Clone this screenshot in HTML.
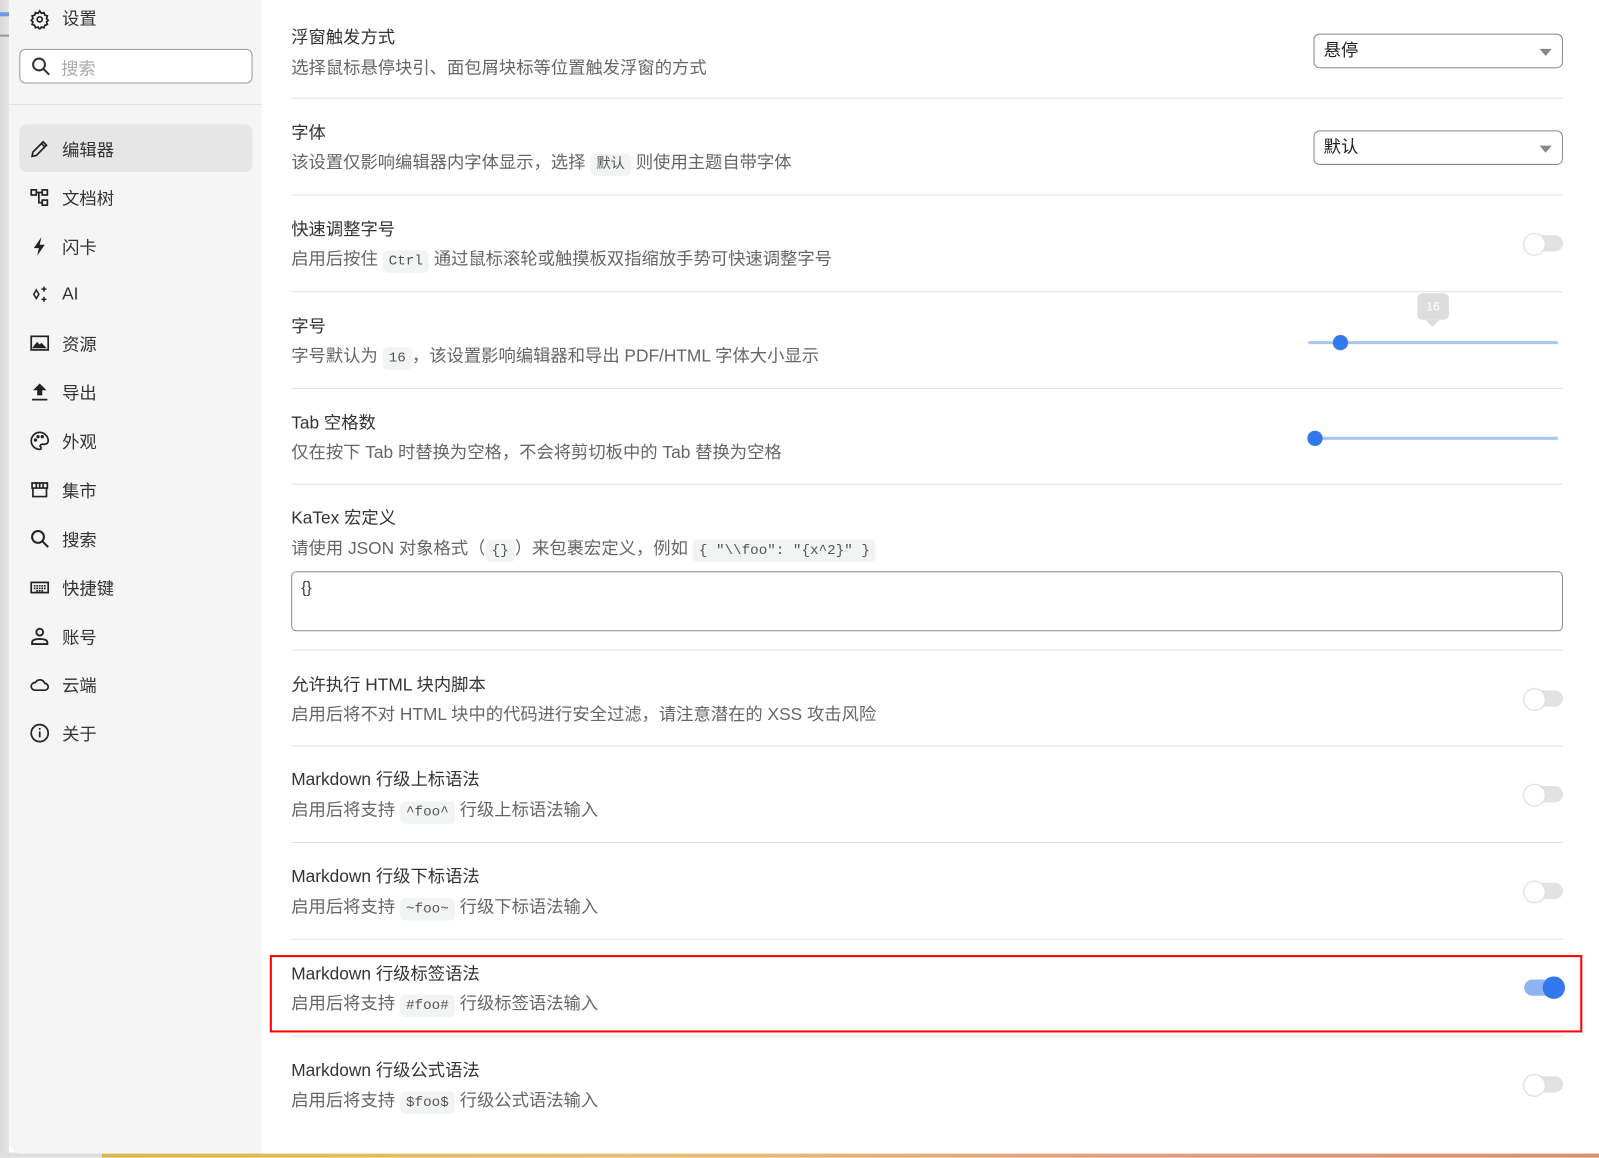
<!DOCTYPE html>
<html><head><meta charset="utf-8">
<style>
*{box-sizing:border-box;margin:0;padding:0}
html,body{width:1599px;height:1157px;overflow:hidden;background:#fff;font-family:"Liberation Sans","Noto Sans CJK SC",sans-serif}
#root{position:absolute;left:0;top:0;width:1571px;height:1137px;transform:scale(1.0182);transform-origin:0 0}
.leftstrip{position:absolute;left:0;top:0;width:9px;height:1137px;background:linear-gradient(90deg,#d8d8d8,#e6e6e6)}
.leftstrip .b{position:absolute;left:0;top:12px;width:9px;height:4px;background:#6f9ce0}
.leftstrip .g{position:absolute;left:0;top:34px;width:9px;height:2px;background:#999}
.bottom{position:absolute;left:0;top:1132px;width:1571px;height:5px;background:linear-gradient(90deg,#ddd 0,#ddd 100px,#d8b850 100px,#e8c070 40%,#e0a080 70%,#d89070)}
.panel{position:absolute;left:9px;top:0;width:1562px;height:1133px;background:#fff;border-bottom-left-radius:12px;overflow:hidden}
.side{position:absolute;left:0;top:0;width:248px;height:1133px;background:#f5f5f5}
.side .hd{position:absolute;left:20px;top:7px;font-size:17px;color:#333;display:flex;align-items:center;gap:12px;line-height:24px}
.search{position:absolute;left:10px;top:48px;width:229px;height:34px;border:1px solid #999;border-radius:6px;background:#fff;display:flex;align-items:center;padding-left:10px;gap:10px;color:#aaa;font-size:17px}
.sep{position:absolute;left:0;top:102px;width:248px;height:1px;background:#e0e0e0}
.item{position:absolute;left:10px;width:229px;height:47px;border-radius:8px;display:flex;align-items:center;padding-left:10px;gap:12px;font-size:17px;color:#333}
.item.act{background:#e6e6e6}
.item svg{width:20px;height:20px;flex:none}
.t{position:absolute;left:277px;font-size:17px;color:#333;line-height:22px;white-space:nowrap}
.d{position:absolute;left:277px;font-size:17px;color:#666;white-space:nowrap;line-height:22px}
.c{font-family:"Liberation Mono","Noto Sans CJK SC",monospace;font-size:14px;background:#f2f3f3;border-radius:5px;padding:3px 6px;color:#555}
.hr{position:absolute;left:277px;width:1249px;height:1px;background:#e3e3e3}
.sel{position:absolute;left:1281px;width:245px;height:34px;border:1px solid #888;border-radius:6px;font-size:17px;color:#222;padding:5px 0 0 9px;line-height:22px}
.sel:after{content:"";position:absolute;right:10px;top:14px;border-left:6px solid transparent;border-right:6px solid transparent;border-top:7px solid #888}
.tg{position:absolute;left:1488px;width:38px;height:16px;border-radius:8px;background:#e2e2e2}
.tg:before{content:"";position:absolute;left:-1px;top:-2px;width:20px;height:20px;border-radius:50%;background:#fff;border:1px solid #e0e0e0;box-shadow:0 0 1px #ccc}
.tg.on{background:#8fb4f5}
.tg.on:before{left:18px;top:-3px;width:22px;height:22px;background:#3478f0;border:none}
.sl{position:absolute;left:1276px;width:245px;height:3px;background:#aac6f5}
.dot{position:absolute;width:15px;height:15px;border-radius:50%;background:#3478f0}
</style></head><body>
<div id="root">
<div class="leftstrip"><div class="b"></div><div class="g"></div></div>
<div class="bottom"></div>
<div class="panel">
<div class="side">
 <div class="hd"><svg width="20" height="20" viewBox="0 0 24 24" fill="none" stroke="#222" stroke-width="2"><circle cx="12" cy="12" r="3"/><path d="M12 2l2 3 3-1 1 3 3 1-1 3 2 2-2 2 1 3-3 1-1 3-3-1-2 3-2-3-3 1-1-3-3-1 1-3-2-2 2-2-1-3 3-1 1-3 3 1z"/></svg>设置</div>
 <div class="search"><svg width="20" height="20" viewBox="0 0 24 24" fill="none" stroke="#333" stroke-width="2.4"><circle cx="10" cy="10" r="7"/><path d="M15 15l7 7"/></svg>搜索</div>
 <div class="sep"></div>
 <div class="item act" style="top:122px"><svg viewBox="0 0 24 24" fill="none" stroke="#222" stroke-width="2"><path d="M3 21l1-5L16 4l4 4L8 20z M14 6l4 4"/></svg>编辑器</div>
 <div class="item" style="top:170px"><svg viewBox="0 0 24 24" fill="none" stroke="#222" stroke-width="2"><rect x="2" y="3" width="6" height="6"/><rect x="15" y="3" width="6" height="6"/><rect x="15" y="15" width="6" height="6"/><path d="M8 6h7M11 6v12h4"/></svg>文档树</div>
 <div class="item" style="top:218px"><svg viewBox="0 0 24 24"><path d="M14 1L5 14h6l-2 9 9-13h-6z" fill="#222"/></svg>闪卡</div>
 <div class="item" style="top:265px"><svg viewBox="0 0 24 24" fill="none" stroke="#222" stroke-width="1.8"><path d="M8 7l3 5-3 5-3-5z"/><path d="M17 3v6M14 6h6M17 15v6M14 18h6"/></svg>AI</div>
 <div class="item" style="top:313px"><svg viewBox="0 0 24 24" fill="none" stroke="#222" stroke-width="2"><rect x="2" y="4" width="20" height="16"/><path d="M5 17l4-5 3 3 2-2 4 4z" fill="#222"/></svg>资源</div>
 <div class="item" style="top:361px"><svg viewBox="0 0 24 24"><path d="M12 2l-8 8h5v6h6v-6h5z M3 20h18v2H3z" fill="#222"/></svg>导出</div>
 <div class="item" style="top:409px"><svg viewBox="0 0 24 24" fill="none" stroke="#222" stroke-width="2"><path d="M12 2a10 10 0 100 20c2 0 2-2 1-3s0-3 2-3h3a4 4 0 004-4C22 6 17 2 12 2z"/><circle cx="7" cy="11" r="1" fill="#222"/><circle cx="10" cy="7" r="1" fill="#222"/><circle cx="15" cy="7" r="1" fill="#222"/></svg>外观</div>
 <div class="item" style="top:457px"><svg viewBox="0 0 24 24" fill="none" stroke="#222" stroke-width="2"><path d="M3 4h18v6H3z M4 10v10h16V10 M8 4v6M12 4v6M16 4v6"/></svg>集市</div>
 <div class="item" style="top:505px"><svg viewBox="0 0 24 24" fill="none" stroke="#222" stroke-width="2.4"><circle cx="10" cy="10" r="7"/><path d="M15 15l7 7"/></svg>搜索</div>
 <div class="item" style="top:553px"><svg viewBox="0 0 24 24" fill="none" stroke="#222" stroke-width="2"><rect x="2" y="6" width="20" height="12"/><path d="M5 10h14M5 13h14M8 16h8" stroke-dasharray="2 1"/></svg>快捷键</div>
 <div class="item" style="top:601px"><svg viewBox="0 0 24 24" fill="none" stroke="#222" stroke-width="2.2"><circle cx="12" cy="7" r="4"/><path d="M3 21v-2c0-3 5-4 9-4s9 1 9 4v2z"/></svg>账号</div>
 <div class="item" style="top:648px"><svg viewBox="0 0 24 24" fill="none" stroke="#222" stroke-width="2"><path d="M6 19h12a4 4 0 000-8 6 6 0 00-11-1 4.5 4.5 0 00-1 9z"/></svg>云端</div>
 <div class="item" style="top:696px"><svg viewBox="0 0 24 24" fill="none" stroke="#222" stroke-width="2"><circle cx="12" cy="12" r="10"/><path d="M12 10v7M12 6v2"/></svg>关于</div>
</div>

<div class="t" style="top:26px">浮窗触发方式</div>
<div class="d" style="top:56px">选择鼠标悬停块引、面包屑块标等位置触发浮窗的方式</div>
<div class="sel" style="top:33px">悬停</div>
<div class="hr" style="top:96px"></div>

<div class="t" style="top:120px">字体</div>
<div class="d" style="top:149px">该设置仅影响编辑器内字体显示，选择 <span class="c">默认</span> 则使用主题自带字体</div>
<div class="sel" style="top:128px">默认</div>
<div class="hr" style="top:191px"></div>

<div class="t" style="top:215px">快速调整字号</div>
<div class="d" style="top:244px">启用后按住 <span class="c">Ctrl</span> 通过鼠标滚轮或触摸板双指缩放手势可快速调整字号</div>
<div class="tg" style="top:231px"></div>
<div class="hr" style="top:286px"></div>

<div class="t" style="top:310px">字号</div>
<div class="d" style="top:339px">字号默认为 <span class="c">16</span>，该设置影响编辑器和导出 PDF/HTML 字体大小显示</div>
<div style="position:absolute;left:1383px;top:288px;width:31px;height:26px;background:#ddd;border-radius:5px;color:#fff;font-size:12px;text-align:center;line-height:26px">16</div>
<div style="position:absolute;left:1391px;top:314px;border-left:7px solid transparent;border-right:7px solid transparent;border-top:7px solid #ddd"></div>
<div class="sl" style="top:335px"></div>
<div class="dot" style="left:1300px;top:329px"></div>
<div class="hr" style="top:381px"></div>

<div class="t" style="top:405px">Tab 空格数</div>
<div class="d" style="top:434px">仅在按下 Tab 时替换为空格，不会将剪切板中的 Tab 替换为空格</div>
<div class="sl" style="top:429px"></div>
<div class="dot" style="left:1275px;top:423px"></div>
<div class="hr" style="top:475px"></div>

<div class="t" style="top:498px">KaTex 宏定义</div>
<div class="d" style="top:528px">请使用 JSON 对象格式（<span class="c">{}</span>）来包裹宏定义，例如 <span class="c">{ "\\foo": "{x^2}" }</span></div>
<div style="position:absolute;left:277px;top:561px;width:1249px;height:59px;border:1px solid #888;border-radius:5px;font-size:15px;color:#333;padding:7px 9px">{}</div>
<div class="hr" style="top:638px"></div>

<div class="t" style="top:662px">允许执行 HTML 块内脚本</div>
<div class="d" style="top:691px">启用后将不对 HTML 块中的代码进行安全过滤，请注意潜在的 XSS 攻击风险</div>
<div class="tg" style="top:678px"></div>
<div class="hr" style="top:732px"></div>

<div class="t" style="top:755px">Markdown 行级上标语法</div>
<div class="d" style="top:785px">启用后将支持 <span class="c">^foo^</span> 行级上标语法输入</div>
<div class="tg" style="top:772px"></div>
<div class="hr" style="top:827px"></div>

<div class="t" style="top:850px">Markdown 行级下标语法</div>
<div class="d" style="top:880px">启用后将支持 <span class="c">~foo~</span> 行级下标语法输入</div>
<div class="tg" style="top:867px"></div>
<div class="hr" style="top:922px"></div>

<div style="position:absolute;left:256px;top:938px;width:1289px;height:76px;border:2px solid #f00"></div>
<div class="t" style="top:946px">Markdown 行级标签语法</div>
<div class="d" style="top:975px">启用后将支持 <span class="c">#foo#</span> 行级标签语法输入</div>
<div class="tg on" style="top:962px"></div>
<div class="hr" style="top:1017px"></div>

<div class="t" style="top:1041px">Markdown 行级公式语法</div>
<div class="d" style="top:1070px">启用后将支持 <span class="c">$foo$</span> 行级公式语法输入</div>
<div class="tg" style="top:1057px"></div>
</div>
</div>
</body></html>
